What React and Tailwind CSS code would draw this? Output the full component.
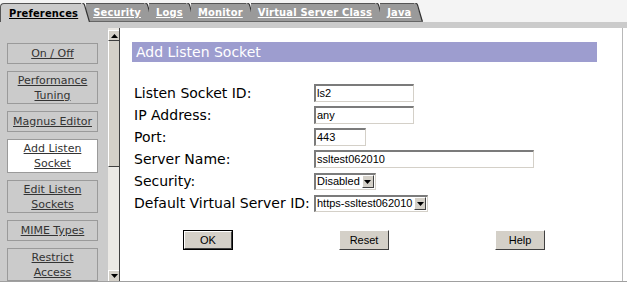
import React from "react";

const Tab = ({ label, active, first }) => (
  <div className={`flex items-end h-[19px] shrink-0 ${first ? "" : "-ml-[4px]"} ${active ? "z-10" : ""}`}>
    <div
      className={`h-[19px] flex items-center ${first ? "pl-[8px] rounded-tl-[4px] border-l border-[#555]" : "pl-[7px]"} pr-[3px] border-t border-[#555] ${
        active ? "bg-[#cbcbcb] text-black" : "bg-[#9a9a9a] text-white border-b border-b-[#666]"
      }`}
    >
      <span className="text-[11px] font-bold underline leading-none whitespace-nowrap font-['DejaVu_Sans_Condensed','DejaVu_Sans',sans-serif] tracking-[0.2px]">
        {label}
      </span>
    </div>
    <svg width="9" height="19" viewBox="0 0 9 19" className="block">
      <polygon points="0,0 2,0 9,19 0,19" fill={active ? "#cbcbcb" : "#9a9a9a"} />
      <path d="M1.5 0.5 Q3 0.5 3.5 2 L8.5 19" stroke="#333" strokeWidth="1.2" fill="none" />
      {!active && <line x1="0" y1="18.5" x2="9" y2="18.5" stroke="#666" />}
    </svg>
  </div>
);

const SideBtn = ({ lines, active, h }) => (
  <div
    className={`ml-[7px] w-[91px] ${h} shrink-0 mb-[7px] border border-[#9a9a9a] flex flex-col items-center justify-center ${
      active ? "bg-white" : "bg-[#cbcbcb]"
    }`}
  >
    {lines.map((l) => (
      <span key={l} className="text-[11px] leading-[15px] text-[#333] underline whitespace-nowrap font-['DejaVu_Sans',sans-serif]">
        {l}
      </span>
    ))}
  </div>
);

const Input = ({ w, value }) => (
  <div
    className={`${w} h-[18px] bg-white border-t-2 border-l-2 border-t-[#7b7b7b] border-l-[#7b7b7b] border-b border-r border-b-[#d4d0c8] border-r-[#d4d0c8] flex items-center pl-[1px] text-[11px] text-black font-['Liberation_Sans',Arial,sans-serif]`}
  >
    {value}
  </div>
);

const Select = ({ value }) => (
  <div className="h-[17px] bg-white border-t-2 border-l-2 border-t-[#7b7b7b] border-l-[#7b7b7b] border-b border-r border-b-[#d4d0c8] border-r-[#d4d0c8] flex items-center text-[11px] text-black font-['Liberation_Sans',Arial,sans-serif]">
    <span className="pl-[1px] pr-[2px] whitespace-nowrap">{value}</span>
    <div className="w-[12px] h-[13px] bg-[#d4d0c8] border-t border-l border-white border-b border-r border-b-[#404040] border-r-[#404040] flex items-center justify-center mr-[1px]">
      <svg width="7" height="4" viewBox="0 0 7 4">
        <polygon points="0,0 7,0 3.5,4" fill="#000" />
      </svg>
    </div>
  </div>
);

const Btn = ({ label, def }) => (
  <div className={`w-[50px] h-[20px] ${def ? "border border-black" : ""}`}>
    <div className="w-full h-full bg-[#d4d0c8] border-t border-l border-white border-b border-r border-b-[#404040] border-r-[#404040] flex items-center justify-center text-[11px] text-black font-['Liberation_Sans',Arial,sans-serif]">
      {label}
    </div>
  </div>
);

const Row = ({ label, children }) => (
  <div className="flex items-center h-[22px]">
    <div className="w-[180px] text-[14px] text-black whitespace-nowrap font-['DejaVu_Sans',sans-serif] leading-none">{label}</div>
    {children}
  </div>
);

export default function App() {
  return (
    <div className="w-[627px] h-[282px] bg-white overflow-hidden flex flex-col">
      <div className="h-[22px] shrink-0 bg-[#f4f4f4] flex items-end pl-0">
        <Tab label="Preferences" active first />
        <Tab label="Security" />
        <Tab label="Logs" />
        <Tab label="Monitor" />
        <Tab label="Virtual Server Class" />
        <Tab label="Java" />
      </div>
      <div className="h-[6px] shrink-0 bg-[#cbcbcb]" />
      <div className="flex flex-1 min-h-0 border-b border-[#a0a0a0]">
        <div className="w-[108px] bg-[#cbcbcb] pt-[15px] overflow-hidden flex flex-col">
          <SideBtn lines={["On / Off"]} h="h-[21px]" />
          <SideBtn lines={["Performance", "Tuning"]} h="h-[33px]" />
          <SideBtn lines={["Magnus Editor"]} h="h-[21px]" />
          <SideBtn lines={["Add Listen", "Socket"]} h="h-[34px]" active />
          <SideBtn lines={["Edit Listen", "Sockets"]} h="h-[33px]" />
          <SideBtn lines={["MIME Types"]} h="h-[21px]" />
          <SideBtn lines={["Restrict", "Access"]} h="h-[33px]" />
        </div>
        <div className="w-[12px] flex flex-col bg-[#ebe9e5] border-r border-[#404040]">
          <div className="h-[11px] mt-[2px] bg-[#d4d0c8] border-t border-l border-white border-b border-b-[#404040] flex items-center justify-center">
            <svg width="7" height="4" viewBox="0 0 7 4">
              <polygon points="3.5,0 7,4 0,4" fill="#000" />
            </svg>
          </div>
          <div className="h-[126px] bg-[#d4d0c8] border-l border-white border-b border-b-[#404040]" />
          <div className="flex-1" />
          <div className="h-[11px] bg-[#d4d0c8] border-t border-l border-white flex items-center justify-center">
            <svg width="7" height="4" viewBox="0 0 7 4">
              <polygon points="0,0 7,0 3.5,4" fill="#000" />
            </svg>
          </div>
        </div>
        <div className="flex-1 flex">
          <div className="flex-1 flex flex-col pl-[12px] pt-[14px]">
            <div className="w-[465px] h-[20px] bg-[#9d9dcf] flex items-center pl-[4px] text-[14px] text-white font-['DejaVu_Sans',sans-serif]">
              Add Listen Socket
            </div>
            <div className="mt-[20px] pl-[2px] flex flex-col">
              <Row label="Listen Socket ID:">
                <Input w="w-[100px]" value="ls2" />
              </Row>
              <Row label="IP Address:">
                <Input w="w-[100px]" value="any" />
              </Row>
              <Row label="Port:">
                <Input w="w-[52px]" value="443" />
              </Row>
              <Row label="Server Name:">
                <Input w="w-[220px]" value="ssltest062010" />
              </Row>
              <Row label="Security:">
                <Select value="Disabled" />
              </Row>
              <Row label="Default Virtual Server ID:">
                <Select value="https-ssltest062010" />
              </Row>
            </div>
            <div className="mt-[16px] ml-[51px] flex gap-[106px]">
              <Btn label="OK" def />
              <Btn label="Reset" />
              <Btn label="Help" />
            </div>
          </div>
          <div className="w-[5px] border-l border-[#b8b8b8]" />
        </div>
      </div>
    </div>
  );
}
